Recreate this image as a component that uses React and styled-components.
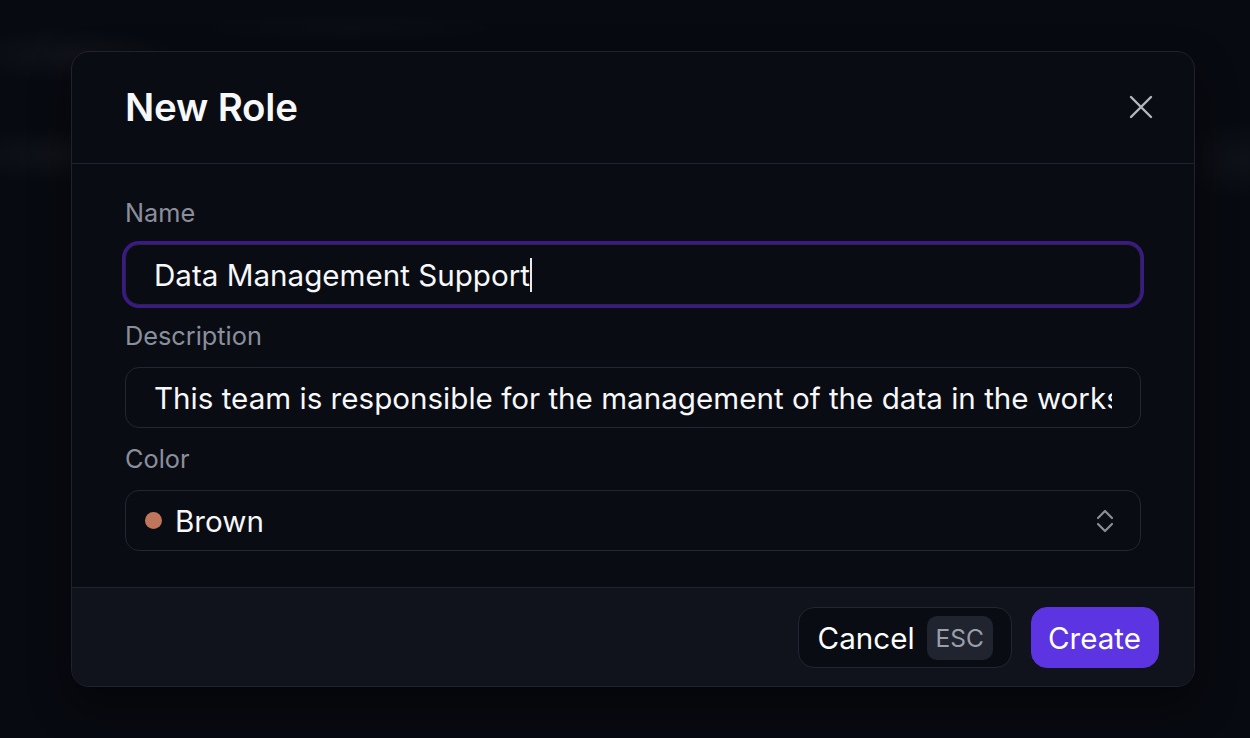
import React from 'react';
import styled, { createGlobalStyle } from 'styled-components';

const GlobalStyle = createGlobalStyle`
    * { box-sizing: border-box; }
    html, body {
        margin: 0;
        height: 100%;
        background-color: #080a11;
        font-family: Inter, "Noto Sans", sans-serif;
        -webkit-font-smoothing: antialiased;
    }
    #root { height: 100%; }
`;

/* dimmed, blurred app behind the dialog */
const Backdrop = styled.div`
    height: 100vh;
    display: flex;
    align-items: center;
    justify-content: center;
    padding-left: 16px;
    background:
        radial-gradient(ellipse 110px 28px at 70px 55px, rgba(255, 255, 255, 0.035), transparent),
        radial-gradient(ellipse 110px 28px at 60px 155px, rgba(255, 255, 255, 0.035), transparent),
        radial-gradient(ellipse 60px 40px at 1240px 160px, rgba(255, 255, 255, 0.03), transparent),
        radial-gradient(ellipse 160px 16px at 350px 28px, rgba(255, 255, 255, 0.015), transparent),
        #080a11;
`;

const Dialog = styled.div`
    width: 1124px;
    background: #0a0c13;
    border: 1.5px solid #1f2330;
    border-radius: 18px;
    overflow: hidden;
    box-shadow: 0 18px 40px rgba(0, 0, 0, 0.45);
    color: #f4f5f7;
`;

const Header = styled.div`
    height: 112px;
    display: flex;
    align-items: center;
    justify-content: space-between;
    padding: 0 33px 2px 53px;
    border-bottom: 1.5px solid #1f2330;
`;

const Title = styled.h2`
    margin: 0;
    font-size: 38.5px;
    font-weight: 600;
    letter-spacing: -0.2px;
    color: #f7f8fa;
`;

const CloseButton = styled.button`
    width: 40px;
    height: 40px;
    border: none;
    background: transparent;
    display: flex;
    align-items: center;
    justify-content: center;
    padding: 0;
    cursor: pointer;
`;

const Body = styled.div`
    display: flex;
    flex-direction: column;
    gap: 16px;
    padding: 34px 53px 36px 53px;
`;

const Label = styled.label`
    font-size: 25.3px;
    line-height: 30px;
    color: #8a8f9c;
`;

const Field = styled.div`
    height: 61px;
    display: flex;
    align-items: center;
    gap: 12px;
    padding: 0 28px 0 28px;
    border-radius: 14px;
    background: #0a0c13;
    border: 1.5px solid ${({ $focused }) => ($focused ? '#2c2447' : '#232734')};
    box-shadow: ${({ $focused }) => ($focused ? '0 0 0 3px #3b1a86' : 'none')};
    font-size: 29.6px;
    color: #f7f8fa;
`;

const FieldText = styled.span`
    flex: 1;
    min-width: 0;
    overflow: hidden;
    white-space: nowrap;
    display: flex;
    align-items: center;
`;

const Caret = styled.span`
    display: inline-block;
    flex-shrink: 0;
    width: 2px;
    height: 34px;
    background: #e8e9ee;
`;

const Swatch = styled.span`
    width: 17px;
    height: 17px;
    border-radius: 50%;
    background: ${({ $color }) => $color};
    flex-shrink: 0;
`;

const SelectField = styled(Field)`
    padding: 0 26px 0 19px;
    gap: 13px;
`;

const Footer = styled.div`
    display: flex;
    justify-content: flex-end;
    align-items: center;
    gap: 19px;
    padding: 19px 35px 18px;
    background: #10131b;
    border-top: 1.5px solid #1f2330;
`;

const Button = styled.button`
    height: 61px;
    display: flex;
    align-items: center;
    gap: 12px;
    border-radius: 16px;
    font-family: inherit;
    font-size: 29.6px;
    color: #ffffff;
    cursor: pointer;
    padding: ${({ $primary }) => ($primary ? '0 17px 0 16px' : '0 18px 0 19px')};
    background: ${({ $primary }) => ($primary ? '#5c34e2' : '#0a0c13')};
    border: 1.5px solid ${({ $primary }) => ($primary ? '#5c34e2' : '#222633')};
`;

const Kbd = styled.kbd`
    font-family: inherit;
    font-size: 24.5px;
    color: #9a9fab;
    background: #20242e;
    border-radius: 10px;
    padding: 0 9px;
    height: 44px;
    display: flex;
    align-items: center;
`;

const CloseIcon = () => (
    <svg width="24" height="24" viewBox="0 0 24 24" fill="none">
        <path d="M2 2 L22 22 M22 2 L2 22" stroke="#b4b7bf" strokeWidth="2.4" strokeLinecap="round" />
    </svg>
);

const UpDownIcon = () => (
    <svg width="18" height="24" viewBox="0 0 18 24" fill="none">
        <path
            d="M2 9 L9 2 L16 9 M2 15 L9 22 L16 15"
            stroke="#8a8e98"
            strokeWidth="2.2"
            strokeLinecap="round"
            strokeLinejoin="round"
        />
    </svg>
);

export default function App() {
    return (
        <>
            <GlobalStyle />
            <Backdrop>
                <Dialog>
                    <Header>
                        <Title>New Role</Title>
                        <CloseButton aria-label="Close">
                            <CloseIcon />
                        </CloseButton>
                    </Header>
                    <Body>
                        <Label>Name</Label>
                        <Field $focused>
                            <FieldText>
                                Data Management Support
                                <Caret />
                            </FieldText>
                        </Field>
                        <Label>Description</Label>
                        <Field>
                            <FieldText>
                                This team is responsible for the management of the data in the workspace
                            </FieldText>
                        </Field>
                        <Label>Color</Label>
                        <SelectField>
                            <Swatch $color="#c0765a" />
                            <FieldText>Brown</FieldText>
                            <UpDownIcon />
                        </SelectField>
                    </Body>
                    <Footer>
                        <Button>
                            Cancel
                            <Kbd>ESC</Kbd>
                        </Button>
                        <Button $primary>Create</Button>
                    </Footer>
                </Dialog>
            </Backdrop>
        </>
    );
}
